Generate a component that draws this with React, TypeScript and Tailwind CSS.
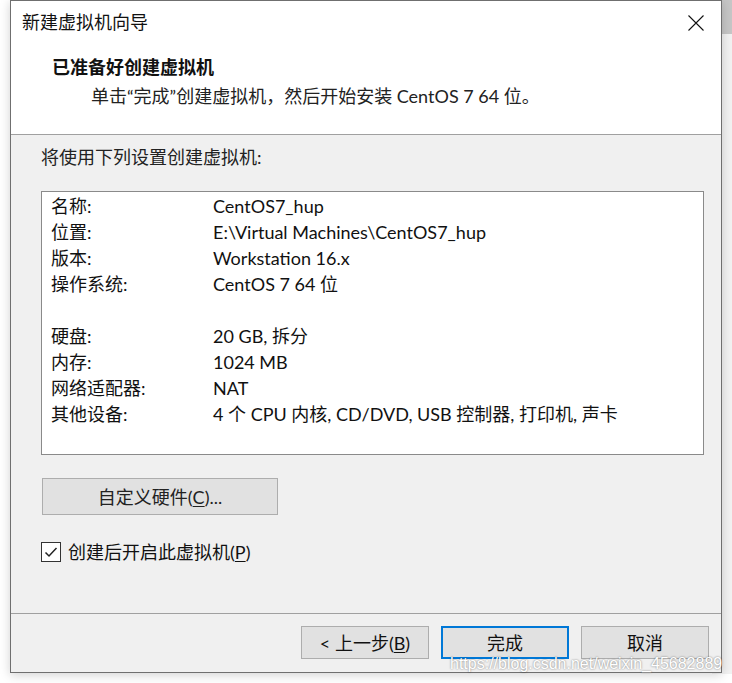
import React from "react";

const rows1: [string, string][] = [
  ["名称:", "CentOS7_hup"],
  ["位置:", "E:\\Virtual Machines\\CentOS7_hup"],
  ["版本:", "Workstation 16.x"],
  ["操作系统:", "CentOS 7 64 位"],
];
const rows2: [string, string][] = [
  ["硬盘:", "20 GB, 拆分"],
  ["内存:", "1024 MB"],
  ["网络适配器:", "NAT"],
  ["其他设备:", "4 个 CPU 内核, CD/DVD, USB 控制器, 打印机, 声卡"],
];

function Row({ k, v }: { k: string; v: string }) {
  return (
    <div className="flex h-[26px] items-center">
      <div className="w-[162px] shrink-0">{k}</div>
      <div>{v}</div>
    </div>
  );
}

export default function App() {
  return (
    <div
      className="relative w-[732px] h-[683px] bg-white overflow-hidden text-[18px] text-[#111] leading-[26px]"
      style={{ fontFamily: 'Lato, "Noto Sans CJK SC", sans-serif' }}
    >
      {/* background window strip at right */}
      <div className="absolute right-0 top-0 w-[20px] h-[34px] bg-[#c6c6c6]" />
      <div className="absolute right-0 top-[34px] w-[20px] h-[640px] bg-[#f2f2f2]" />

      <div className="relative ml-[10px] w-[712px] h-[673px] border border-[#6f6f6f] bg-[#f0f0f0] flex flex-col shadow-[0_2px_10px_rgba(0,0,0,0.18)]">
        {/* header */}
        <div className="h-[133px] bg-white flex flex-col shrink-0">
          <div className="h-[41px] flex items-center justify-between pl-[11px] pr-[16px]">
            <span>新建虚拟机向导</span>
            <svg width="16" height="16" viewBox="0 0 16 16" className="mr-[1px] mt-[2px]">
              <path d="M0.5 0.5 L15.5 15.5 M15.5 0.5 L0.5 15.5" stroke="#111" strokeWidth="1.1" fill="none" />
            </svg>
          </div>
          <div className="mt-[12px] pl-[41px] font-bold">已准备好创建虚拟机</div>
          <div className="mt-[3px] pl-[80px] text-[#222]">
            单击“完成”创建虚拟机，然后开始安装 CentOS 7 64 位。
          </div>
        </div>
        <div className="h-px bg-[#a0a0a0] shrink-0" />

        {/* body */}
        <div className="flex-1 flex flex-col pl-[30px] pt-[9px]">
          <div className="text-[#222]">将使用下列设置创建虚拟机:</div>
          <div className="mt-[21px] w-[663px] h-[264px] border border-[#8a8a8a] bg-white pl-[9px] pt-[1px]">
            {rows1.map(([k, v]) => (
              <Row key={k} k={k} v={v} />
            ))}
            <div className="h-[26px]" />
            {rows2.map(([k, v]) => (
              <Row key={k} k={k} v={v} />
            ))}
          </div>
          <div className="mt-[23px] ml-px w-[236px] h-[37px] border border-[#adadad] bg-[#e1e1e1] flex items-center justify-center text-[#222]">
            <span>
              自定义硬件(<span className="underline underline-offset-2">C</span>)...
            </span>
          </div>
          <div className="mt-[24px] flex items-center h-[26px]">
            <div className="w-[20px] h-[20px] border border-[#333] bg-white flex items-center justify-center">
              <svg width="14" height="12" viewBox="0 0 14 12">
                <path d="M1.5 6.5 L5 10 L12.5 2" stroke="#222" strokeWidth="1.5" fill="none" />
              </svg>
            </div>
            <span className="ml-[7px]">
              创建后开启此虚拟机(<span className="underline underline-offset-2">P</span>)
            </span>
          </div>
        </div>

        <div className="h-px bg-[#a0a0a0] shrink-0" />
        {/* footer */}
        <div className="h-[58px] shrink-0 flex justify-end gap-[12px] pt-[12px] pr-[12px]">
          <div className="w-[128px] h-[33px] border border-[#adadad] bg-[#e1e1e1] flex items-center justify-center">
            <span>
              &lt; 上一步(<span className="underline underline-offset-2">B</span>)
            </span>
          </div>
          <div className="w-[128px] h-[33px] border-2 border-[#0078d7] bg-[#e1e1e1] flex items-center justify-center">
            <span>完成</span>
          </div>
          <div className="w-[128px] h-[33px] border border-[#adadad] bg-[#e1e1e1] flex items-center justify-center">
            <span>取消</span>
          </div>
        </div>
      </div>

      {/* watermark */}
      <div
        className="absolute left-[450px] top-[655px] text-[16px] leading-[18px] text-white [text-shadow:0_0_2px_rgba(0,0,0,0.55)] whitespace-nowrap"
        style={{ fontFamily: '"Liberation Sans", Arial, sans-serif' }}
      >
        https://blog.csdn.net/weixin_45682889
      </div>
    </div>
  );
}
